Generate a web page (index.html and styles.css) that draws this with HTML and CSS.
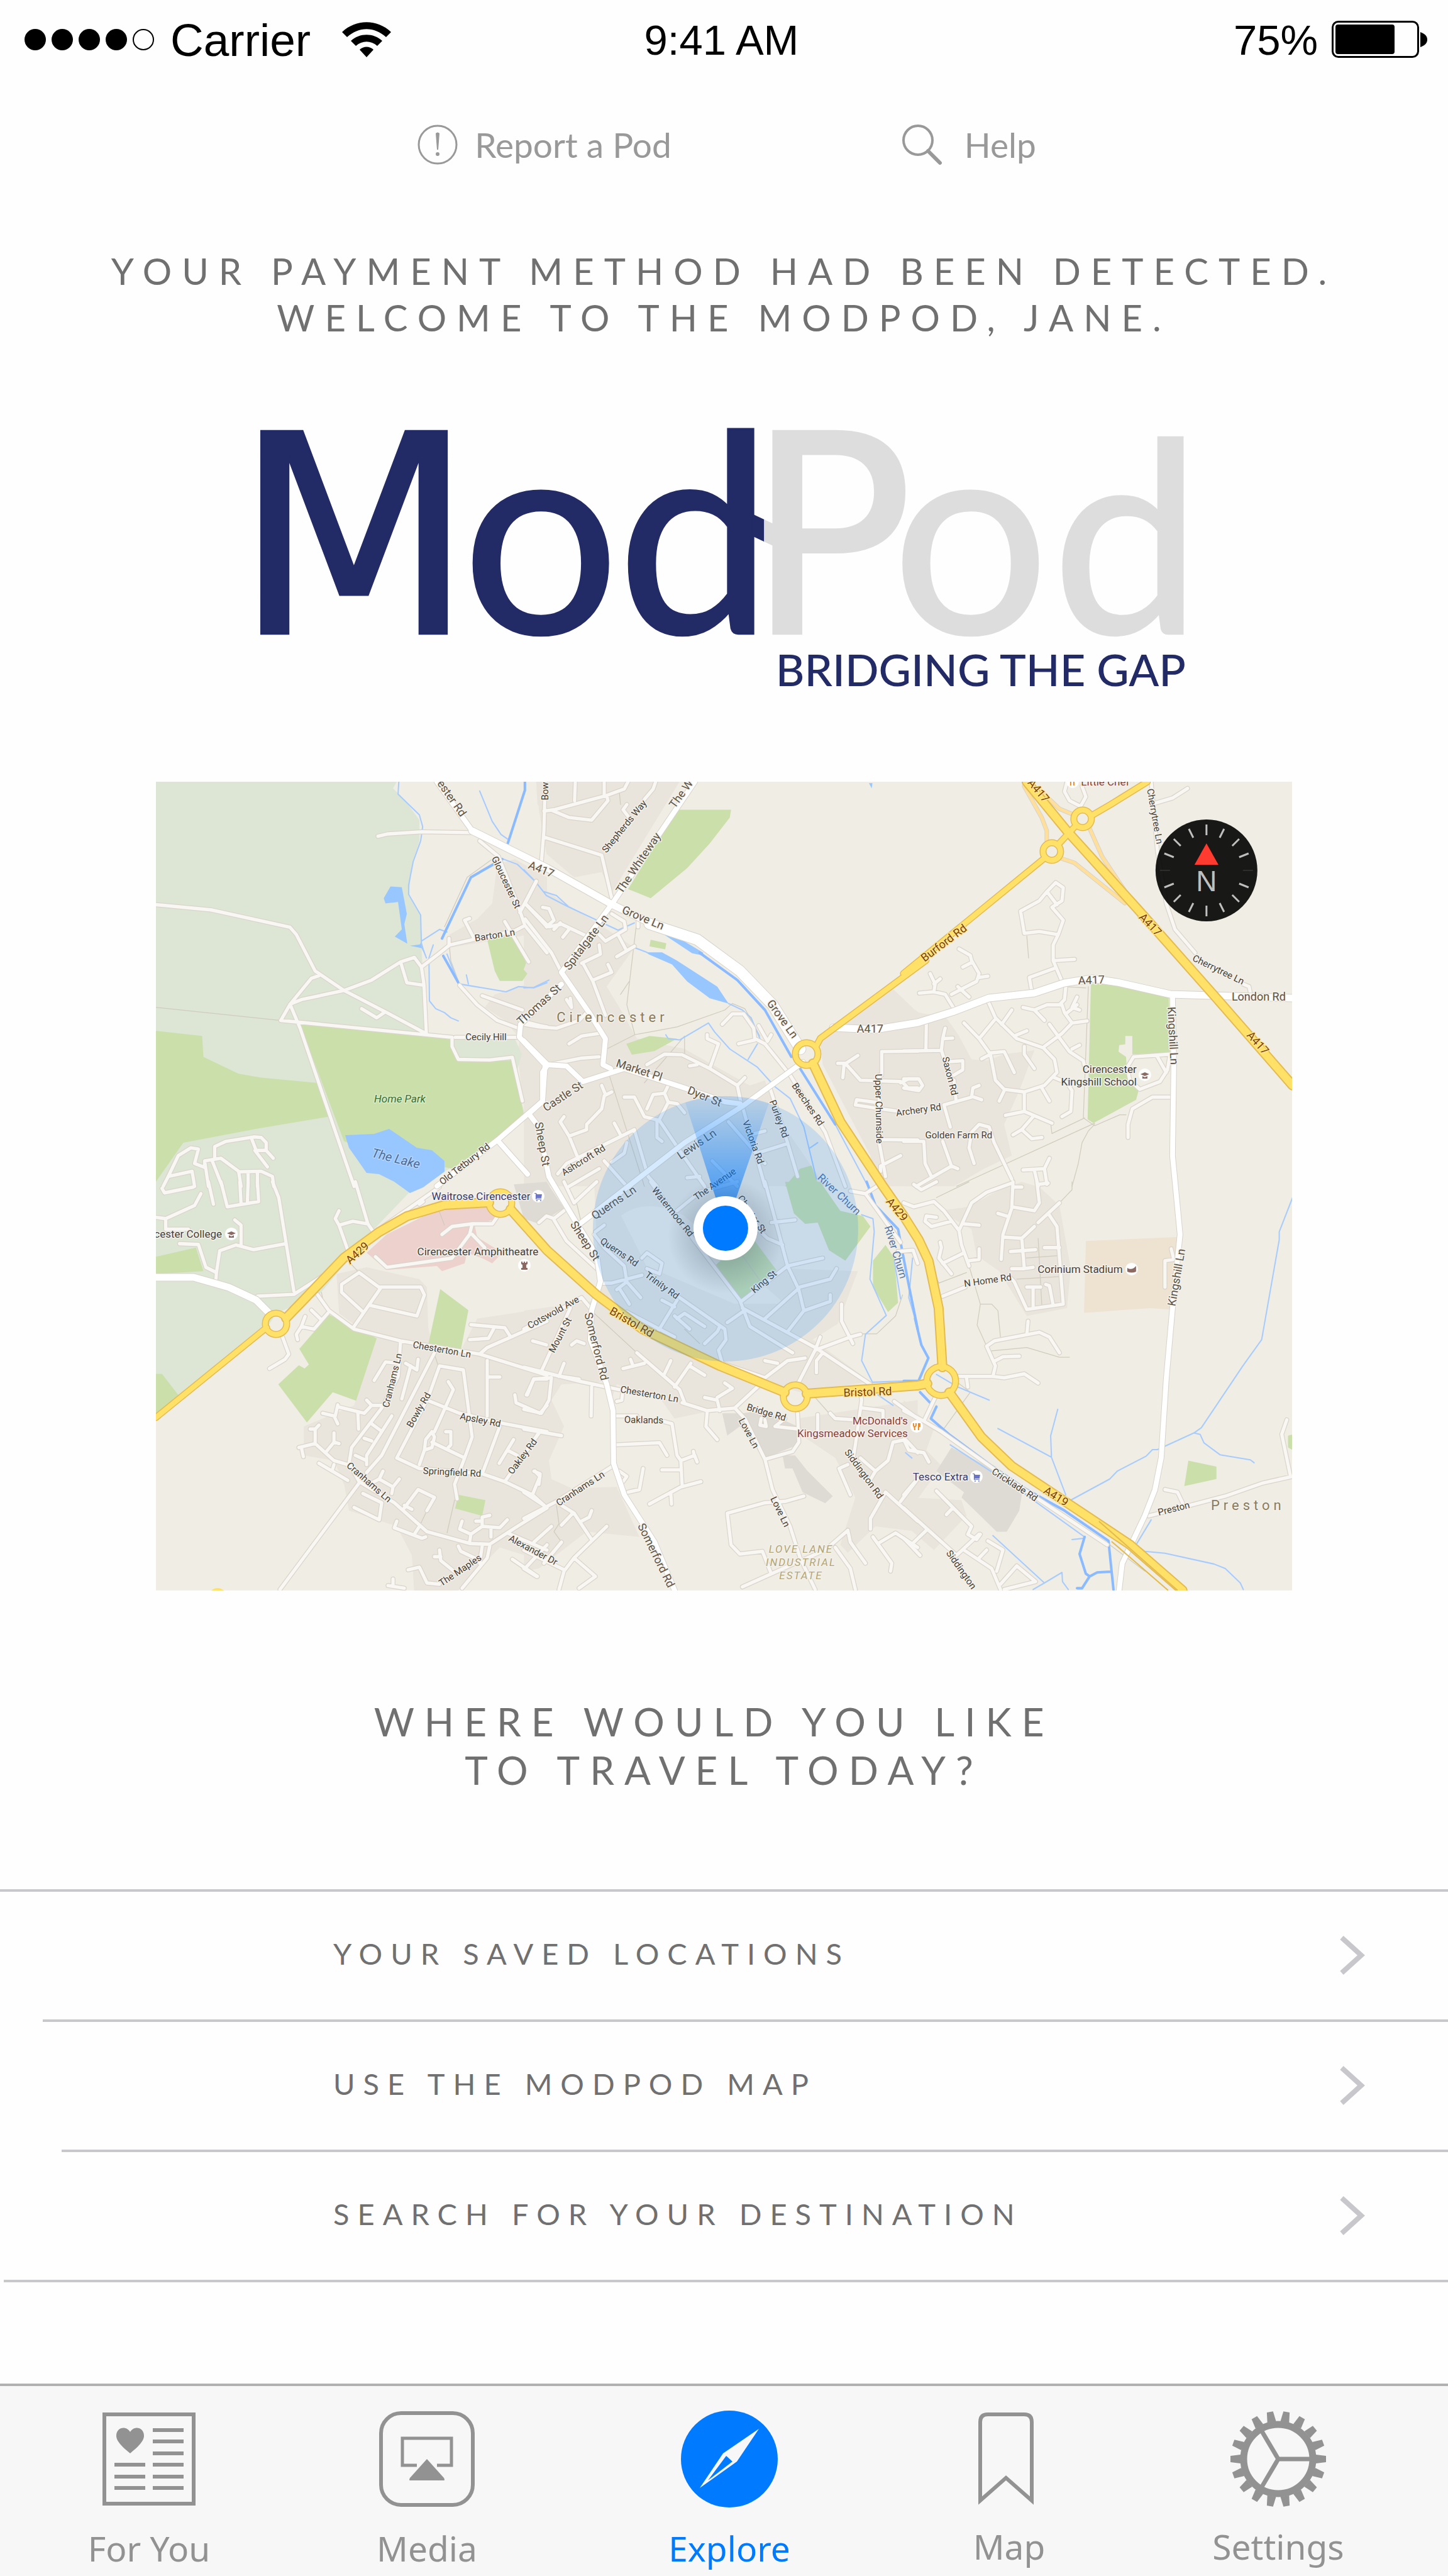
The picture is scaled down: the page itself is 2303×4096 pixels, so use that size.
FILE: index.html
```html
<!DOCTYPE html>
<html lang="en">
<head>
<meta charset="utf-8">
<meta name="viewport" content="width=device-width, initial-scale=1">
<title>ModPod</title>
<link rel="stylesheet" href="styles.css">
</head>
<body>
<div class="app">
  <header class="status">
    <div class="status-left">
      <span class="signal"><i></i><i></i><i></i><i></i><i class="off"></i></span>
      <span class="carrier">Carrier</span>
      <svg class="wifi" viewBox="0 0 78 56" aria-hidden="true">
        <path d="M0 16C22-5 56-5 78 16L70 24C51 7 27 7 8 24Z"/>
        <path d="M14 30C28 17 50 17 64 30L56 38C46 29 32 29 22 38Z"/>
        <path d="M28 44C34 38 44 38 50 44L39 56Z"/>
      </svg>
    </div>
    <time class="clock">9:41 AM</time>
    <div class="status-right">
      <span>75%</span>
      <svg class="battery" viewBox="0 0 152 60" aria-hidden="true">
        <rect x="1.500" y="1.500" width="136" height="56" rx="9" fill="none" stroke="#000" stroke-width="3"/>
        <rect x="6" y="6" width="94" height="47" rx="4"/>
        <path d="M141 18C149 21 152 25 152 30C152 35 149 39 141 42Z"/>
      </svg>
    </div>
  </header>

  <nav class="tools" aria-label="Support">
    <a href="#report">
      <svg viewBox="0 0 66 66" aria-hidden="true">
        <circle cx="33" cy="33" r="30" fill="none" stroke="#999" stroke-width="3"/>
        <path d="M30 15Q33 12 36 15L34 41H32Z" fill="#999"/><circle cx="33" cy="48" r="3" fill="#999"/>
      </svg>
      <span>Report a Pod</span>
    </a>
    <a href="#help">
      <svg viewBox="0 0 66 66" aria-hidden="true" fill="none" stroke="#999">
        <circle cx="26" cy="26" r="23" stroke-width="4"/>
        <path d="M42 43L61 62" stroke-width="6" stroke-linecap="round"/>
      </svg>
      <span>Help</span>
    </a>
  </nav>

  <main>
    <h1 class="welcome">YOUR PAYMENT METHOD HAD BEEN DETECTED.<br>WELCOME TO THE MODPOD, JANE.</h1>

    <svg class="logo" viewBox="0 0 1464 424" role="img" aria-label="ModPod, bridging the gap">
      <text class="mark" y="329"><tspan class="navy cap" x="-42">M</tspan><tspan class="navy" x="318">o</tspan><tspan class="navy" x="563">d</tspan><tspan class="pale cap" x="767">P</tspan><tspan class="pale" x="997">o</tspan><tspan class="pale low" x="1250">d</tspan></text>
      <path d="M776 140L795 149V184L776 175Z" fill="#222b66"/>
      <path d="M795 149L812 157V192L795 184Z" fill="#ddd"/>
      <text class="tagline" x="1461" y="412" text-anchor="end">BRIDGING THE GAP</text>
    </svg>

    <svg class="map" viewBox="0 0 1808 1286" role="img" aria-label="Map of Cirencester">
      <defs>
        <linearGradient id="beam" x1="0" y1="1" x2="0" y2="0">
          <stop offset="0" stop-color="#007aff" stop-opacity=".8"/><stop offset="1" stop-color="#007aff" stop-opacity=".04"/>
        </linearGradient>
        <radialGradient id="shade"><stop offset=".4" stop-color="#345" stop-opacity=".4"/><stop offset="1" stop-color="#345" stop-opacity="0"/></radialGradient>
        <g id="minor">
          <path transform="translate(-4.4 -5.1) scale(.3995 .4136)" d="M895 222L935 213L1070 205L1260 208M11 485L230 505L545 572L570 600L645 740L760 815L930 900L1085 980M660 758L630 768L545 868L508 930L1190 995L1190 1030L1215 1080L1340 1082L1430 1072L1470 1240M545 868L585 960L800 1568M545 868L590 850L760 815L870 775L985 705L1040 688L1068 725L1078 790L1088 985M985 705L1010 785L1078 795M1068 725L1135 675L1180 640L1280 618L1440 585L1480 565M830 885L890 920L920 900M1178 615V640M1275 610L1240 545L1260 538M1300 240L1375 300L1450 480L1480 565L1568 670M1525 395L1460 515M1480 480L1568 570M1400 550L1495 705M1220 795L1290 870L1370 930L1455 960M1310 835L1470 890M1460 930L1540 950L1568 955M1203 995H1458M40 1568L60 1530L100 1450L150 1420L180 1425L165 1480L205 1495L205 1470L270 1460L340 1510L350 1568M60 1530L155 1510L165 1568M245 1460V1415L290 1395L400 1378L430 1380L450 1400V1430L478 1460M390 1380L410 1430H450M405 1430L455 1493M205 1470L220 1568M235 1470L275 1568M340 1512L430 1510L475 1530L480 1568M378 1515V1568M415 1515V1568"/>
          <path transform="translate(-4.4 636.2) scale(.3995 .4183)" d="M35 25L45 42L160 20M11 135L50 140L165 90L190 45M50 140V180H140M105 235L180 238L210 325L252 345L265 262L330 240L400 258L530 235M325 145L350 165V240M252 345L250 370M475 0L500 60L560 415M415 435L560 428L680 355L870 200L1140 20M740 110L725 140L740 165L775 260M740 165L795 150L855 160L880 195M855 160L805 0M1060 85L1075 75M1150 200L1190 170L1270 160L1350 160L1372 130M1270 160L1260 200L1190 290L930 325L885 285M1270 200L1320 250M220 0L240 85M270 0L295 95L420 75L415 0M378 0L375 80M345 0L350 85M655 430L700 490L800 560L985 605L1300 655L1568 735M695 500L640 560L590 550L605 512M590 550L570 580L575 600M630 488L665 520M515 590L540 655L525 675L463 710M800 550L905 405L820 345L750 390V420L830 490M905 400H1065L1080 430L1050 510L865 470M985 605L975 740L910 860L790 1010L780 1070L820 1140L960 1220L1090 1330L1260 1375L1340 1378L1450 1310L1568 1240M1120 650L910 1040L850 1105M820 1145L505 1550M880 755L925 685L980 690M1005 690L1050 715L1055 675M1025 700L990 825M1095 820L1140 700L1235 715L1270 970L1240 1050L1200 1150L1210 1205M1095 820L970 1050L1060 1090L1310 1110L1400 1140L1510 1190L1568 1240M1090 830L1220 880L1400 920L1568 950M1175 760L1195 790L1120 950M1110 990L1240 1050M1060 1075L1080 1020L1085 980L1110 950L1120 970L1110 1010L1080 1020M1165 950H1185V1000L1175 1010M1330 680V890M1330 742H1380M1265 543L1400 555L1420 585M1260 600L1335 595L1355 560M1300 655L1330 630L1568 530M1440 810L1445 840L1540 880L1568 850M1490 810L1515 750H1568M1380 930L1310 1110M1400 1140L1540 950M1435 980L1378 1070M1410 1020L1450 1040M1520 1100L1540 1120L1510 1190M850 830L870 850H910M675 880L720 890L735 920M735 848L725 890M735 855L840 880L870 850M815 880L818 940M870 920L905 945M950 890L850 1040L850 1075M850 1060L805 1040M840 975L870 985M580 1010L645 995L720 1060L775 1075M645 995V940H625M645 940L660 925M598 1045L590 1010M690 1025L720 990V955M720 990L740 995M660 1070L775 1135M720 1075L712 1100M915 1100L900 1130L955 1160L980 1130M955 1160L950 1185M900 1130L860 1150M835 1185L910 1220L900 1285L800 1238M1000 1240L1055 1170L1120 1200L1090 1250M1030 1245L1000 1230M970 1290L960 1315L1070 1355L1085 1350M1040 1340L1060 1310M1230 1290L1220 1320L1265 1340L1310 1310L1380 1315L1410 1285M1340 1268L1310 1275V1310M1345 1315V1350M1265 1340L1260 1370M1285 1290H1310M1310 1385L1300 1450M1340 1385L1330 1430L1230 1545M1215 1385L1225 1405L1280 1430M1140 1400L1145 1440L1210 1490M1120 1425H1145M1015 1475L1060 1465L1090 1525L1140 1530M935 1535L1000 1545M955 1510V1535M1430 1435L1530 1500M1480 1470L1568 1380M1410 1335L1568 1400"/>
          <path transform="translate(585.2 -5.1) scale(.3995 .4136)" d="M85 12L80 200L70 320M80 125L120 120L330 65L400 40L415 12M205 12L202 85M320 12V60M110 122L180 150L270 160L335 85L330 65M525 12L515 40L480 80M80 225L310 295L350 460M410 100L395 120L415 145M50 395L5 480L100 570L150 560L270 615M5 540L110 670L150 745M75 495L100 500L120 545L90 570M180 580L155 610M145 555L120 580M350 520L400 550L405 580L325 625L300 600M375 600L405 655M370 685L440 645M455 540V570M300 640L305 675L230 710M235 710L275 780L325 910M275 775L350 745L335 715M170 850L190 880L185 845M0 945L60 955L130 960L220 930L250 900M180 1020L230 990L300 980M110 1098L230 1075L300 1070M490 1100L560 1060L630 1062L740 1115L850 1180L865 1250M740 1115L775 1020L730 1000V985M690 1100L660 1105M850 1180L880 1150M790 945L830 905H875L915 960L920 1005L855 1020M920 1000L960 1020L1060 1140L1200 1360L1280 1568M935 950L970 1010L985 985M980 1190L1050 1400L1090 1530M870 1260L960 1568M815 1320L960 1480M930 1440L1045 1405M900 1370L960 1355M400 1225H440L480 1300L540 1315L620 1430L720 1568M575 1180L560 1210L515 1215L490 1270M560 1210L575 1245L610 1250L640 1285M575 1245L540 1310M530 1320V1380L550 1395M440 1350L170 1480L135 1520M440 1350L495 1530L530 1568M160 1300L145 1320L180 1375L250 1350V1330L310 1270L320 1220L350 1205M180 1375L220 1470M310 1180L325 1215M360 1325L385 1370M320 1470L410 1568M300 1500L180 1568M410 1400L400 1440L350 1475M750 1470L850 1568M650 1535L700 1530M1270 1150L1275 1100L1330 1065M1250 1095H1280L1340 1160L1500 1165M1425 1140V1050L1568 1048M1500 1170L1530 1155H1568M1510 1170L1530 1190H1568M1415 1140V1400L1440 1530M1420 1388L1568 1390M1420 1270L1320 1255L1325 1235L1400 1245M1420 1270L1480 1278M1500 1450L1420 1490V1510"/>
          <path transform="translate(585.2 636.2) scale(.3995 .4183)" d="M0 705L230 760L380 790M630 840L730 870L840 860L930 780M450 650L620 790L640 840M395 710L480 690M425 675L435 700M585 680L560 730M665 690L600 780M660 700L720 735M720 820L770 830L780 870M770 820L830 785L800 765M730 875L725 930L770 980M360 890H450M560 912L590 920L610 1040L625 1060L630 1150M365 1000L540 992L570 1040M625 1060L680 1040L690 1065M675 1025L680 1045M550 1095H625M500 1225L625 1160L705 1140M585 1180L588 1225M415 1180L460 1170L475 1090M380 1100L410 1120L395 1140M355 1080L130 1215L0 1280M840 860L880 900L960 1055L990 1170L1060 1310L1100 1430L1160 1550M960 1055L1070 1025L1095 990L1090 880M1090 770L1160 640L1180 590M1120 670L1050 680L960 745L790 690M960 680L1010 690M1040 900L1000 930L1095 940M945 900L940 925L965 930L960 905M1160 640L1300 590L1340 580M1265 465V530L1310 615M1190 650L1165 680V725M680 225L860 450L900 550L1070 650M870 480L1160 630L1380 770M865 455L1050 320L1190 290M960 0L1050 320L1095 410L1115 490L1050 570M960 520L1100 400L1220 370L1245 330M1115 490L1220 455V430M985 155L1080 145M920 170L970 215L1030 240M505 0L520 20L680 225M610 110L700 40L850 0M810 535L870 495M620 440L800 560L805 600L775 640L790 690M610 450L530 575M550 450L600 475M600 510L660 560M610 520L640 500L720 550M780 550L770 570L720 615M310 385H350L470 355M280 200L320 250L400 320L410 380L370 410M320 165L285 190M410 380L465 440M380 405L420 465M470 290L490 270L550 310L540 350L490 330M410 495L600 590M60 155L90 130L120 140L160 110M120 145L170 225L290 330M160 0L200 80L290 0M35 605L90 620M70 720L185 480M150 740L220 750M160 690L140 740M265 480L230 440L0 560M190 620L210 605L240 615M10 810L40 750L110 745L100 830L70 880L0 865M270 780L268 890M395 790L390 830L370 835M0 940L150 965M55 960L0 1040M40 1100L65 1110L60 1150M0 1180L80 1230M150 1230L200 1260L270 1360M195 1260L150 1305M230 1290L260 1275L270 1250M330 1310L200 1430L160 1480L140 1550M160 1475L0 1400M200 1430L285 1500L220 1545M110 1310L40 1370M150 1370L80 1450M0 1470L50 1500M1340 800L1345 830L1320 1000L1310 1060M1350 860L1430 870V900M1220 880L1240 900L1320 905M1170 885V960M1340 1050L1400 1100L1450 1060L1470 990L1520 980L1568 1030M1300 1190L1255 1090L1290 1075M1400 1100L1375 1140M1440 1180L1568 1290M1440 1180L1380 1280V1320M1500 1215L1568 1130M1475 835L1568 900M1115 1195L1040 1215L960 1220L810 1260L825 1380L860 1415L950 1405L985 1490M870 1540L1080 1450L1200 1400L1290 1325M1290 1325L1300 1370L1360 1450M1240 1390L1300 1470L1320 1550M1390 1350L1465 1450L1460 1480M1410 1375L1480 1335L1568 1390M1300 35L1360 45L1410 15M1360 45L1500 230M1490 265L1550 260L1568 310"/>
          <path transform="translate(1189.5 -5.1) scale(.3995 .4136)" d="M700 105L660 85L640 50L650 12M705 105L725 70L710 30M1000 95L1070 75L1130 38M985 12L1010 280L1045 480L1080 580L1160 670M1350 790L1375 800L1380 825M480 595L465 510L540 470L570 435L605 400L635 420L630 470L590 495L635 545L615 600L540 588ZM570 435L610 485M615 600L595 640V700L630 780M600 700L680 695M600 730L500 765L510 820M220 655L265 680L270 700L300 750L290 780L190 830M235 725L265 710M300 765L335 760M215 800L260 840M105 750L125 790L120 820L62 825M120 790L145 770M120 820L165 830L200 885M335 855L365 920L450 1000L555 1035L600 1080L610 1130L560 1180L480 1205L400 1195L365 1160L345 1060L300 1000L240 940M300 1000L360 930M345 1055L400 1050L440 1130M310 1078L345 1060M480 1030V1060L520 1115M440 990L490 970M390 945L430 890M400 1200L380 1240M480 1205V1280L590 1325M480 1280L405 1295M515 1300L470 1350L435 1370M470 1350L510 1385L550 1380M550 1190L580 1240M600 1150L650 1170L670 1200L665 1280L630 1300M560 1030L630 980L670 940L730 932M580 945L660 1050L715 1085L720 1110M670 1040L700 1025M640 900L670 940M475 880L520 890L560 930M520 890L570 870H630L640 900M645 800L640 850L620 870M690 840L670 880L700 890M645 905L690 870M90 940L88 1045M0 1048L150 1045L155 1000L165 960M155 1000L195 998M150 1045L165 1090L235 1085V1120L200 1140M200 1160L208 1235M160 1255L270 1225L275 1190L300 1180M280 1225L310 1235M160 1255L185 1340M0 1155H60L75 1180L60 1200L0 1190M0 1395H80L85 1480L110 1530M155 1395L190 1490L50 1568M190 1490L215 1500M280 1480L260 1420L270 1360L300 1330L340 1340L360 1400L430 1540M475 1505L560 1500L580 1460M520 1505L535 1568M560 1500L570 1560M890 1110L915 1070L1060 1060L1050 1120L1020 1165L940 1195L900 1160ZM1010 1070L1045 1130M1070 1225H990L910 1270L893 1330V1380"/>
          <path transform="translate(1189.5 636.2) scale(.3995 .4183)" d="M0 80L40 95L120 75L160 110L220 185L270 80L330 40L430 5M40 10L70 30L130 0M110 170L190 150M110 170L85 150L90 130L130 135M240 160L300 165M220 185L230 240L260 320M145 230L150 250L140 290L190 350M155 310L240 270M260 300L300 295V255M435 0L430 100L395 200L388 295M430 95L520 110L540 80L530 0M375 120L410 130M435 20H470M535 10L575 5M395 210L470 215L520 170M535 155L620 80M575 120L610 170L635 465L490 485L440 380L420 360M470 215L480 330H430M425 265L525 258M480 330L515 325M560 250H620M515 480V400M490 400H545M595 470L580 395L565 390M155 435L245 400M495 530L490 580M620 650L580 590L540 572L360 605L330 625L365 700L355 740H215M365 680L395 665L460 663M355 740L400 745L480 730L535 765M250 745L255 780M125 820L80 910L0 870M80 910L150 950L400 1120L810 1380M0 980L20 1020L80 1030L100 1065M0 1190L45 1140M0 1240L210 1420L300 1340M90 1325L30 1380M0 1355L65 1420M130 1175L270 1310M170 1265L195 1240M270 1310L255 1340L290 1360L305 1340M240 1400L350 1470L385 1550M335 1365L395 1400L370 1480M300 1430L330 1400M385 1530L450 1460L525 1520L400 1550M1040 400V300L1075 295L1065 255M975 1270L1080 1245L1280 1195L1430 1145L1548 1120M1040 1170L1090 1180L1110 1220M1525 905L1505 960L1540 1120"/>
        </g>
        <g id="major">
          <path d="M447 0L503 78L622 137L725 195L785 224"/>
          <path d="M857 0L725 195L645 303L689 367L715 409L711 450L723 456"/>
          <path d="M645 322L580 386L578 406L619 450L615 508L543 570L591 624"/>
          <path d="M543 570L447 643M585 412L623 450L653 452L679 477L745 456L841 487L905 509L929 512"/>
          <path d="M623 450L615 462V508L593 528L609 549L625 628L665 695L701 753L707 795L693 841L691 887L717 958L727 1000L728 1084L745 1134L793 1209L825 1286"/>
          <path d="M1029 446L933 516L841 574L677 701"/>
          <path d="M1617 342L1619 450L1617 595L1621 636L1629 720L1617 837L1607 950L1599 1075L1589 1126L1573 1167L1537 1243L1532 1286"/>
        </g>
        <g id="broad">
          <path d="M1077 391L1144 394L1212 383L1270 365L1325 344L1397 336L1445 320L1489 313L1529 319L1613 338L1808 344"/>
          <path d="M0 788H60L116 804L159 824L180 845M503 78L622 137L725 195L785 224"/>
          <path class="wide" d="M785 226L861 251L929 301L981 355L1025 425"/>
        </g>
        <g id="yellow">
          <path d="M0 1011L176 868M1225 284L1057 408L1050 421M1189 305L1414 121M1435 100L1463 70M1488 54L1519 36L1577 0"/>
          <path class="wide" d="M207 853L235 824L299 757L355 716L399 691L459 673L530 669M564 680L622 745L701 816L773 870L897 929L1000 971M1035 973L1212 960L1227 957M1045 448L1089 541L1157 644L1189 690L1213 728L1229 762L1245 837L1251 931M1262 971L1313 1042L1361 1088L1549 1213L1633 1286M1385 0L1449 78L1505 140L1561 202L1685 342L1808 483"/>
          <circle cx="191" cy="862" r="17"/><circle cx="548" cy="670" r="18"/><circle cx="1017" cy="978" r="19"/><circle cx="1249" cy="953" r="23"/><circle cx="1035" cy="433" r="18"/><circle cx="1425" cy="111" r="14"/><circle cx="1474" cy="59" r="14"/>
        </g>
      </defs>

      <rect width="1808" height="1286" fill="#f0ede5"/>
      <g fill="#e9e5dd">
        <path transform="translate(-4.4 -5.1) scale(.3995 .4136)" d="M1568 380L1440 310L1370 330L1350 480L1290 540L1180 600V650L1500 600L1525 780L1360 830L1320 880L1400 930L1460 1000L1450 1060L1480 1290L1568 1250ZM1525 12H1568V130L1530 100Z"/>
        <path transform="translate(-4.4 636.2) scale(.3995 .4183)" d="M730 350L850 325L1060 370L1090 400L1095 550L1110 620L1225 640L1290 520L1568 480V1450L1480 1420L1380 1390L1200 1568H1040L1030 1420L970 1310L780 1250L760 1150L720 1060L600 1040V930L800 850L880 600L740 500Z"/>
        <path transform="translate(585.2 -5.1) scale(.3995 .4136)" d="M55 12H620L350 440L310 360L200 380L90 290L60 120ZM0 380L300 560L440 650L330 800L380 880L450 1000L640 1040L900 1180L960 1160L1010 1300L1200 1568H0ZM1180 1010L1460 800L1568 900V1568H1400L1380 1450L1190 1100Z"/>
        <path transform="translate(585.2 636.2) scale(.3995 .4183)" d="M0 490L300 450L980 760L850 850L600 900L540 820L370 770L340 850L330 760L150 770L110 830L160 930L100 1060L110 1130L190 1165L370 1160L460 1350L250 1330L60 1470L0 1480ZM280 0H950L1060 330L1330 340L1250 540L1150 600L1380 760L1100 800L880 740L300 450ZM1090 900L1568 830V1330L1400 1310L1290 1410L1260 1380L1320 1200L1240 1050L1100 960Z"/>
        <path transform="translate(1189.5 -5.1) scale(.3995 .4136)" d="M0 860L60 900L170 920L220 990L270 1080L330 1085L400 1060L520 1045L480 1150L460 1200L400 1330L430 1450L320 1500L200 1568H0Z"/>
        <path transform="translate(1189.5 636.2) scale(.3995 .4183)" d="M140 110L260 95L380 30L470 0L540 20L620 90L665 330L650 480L490 510L380 340L290 280L270 180ZM0 830L120 940L90 1020L150 1080L60 1200L0 1220ZM20 1200L230 1210L250 1270L120 1400L0 1300Z"/>
      </g>
      <path fill="#f0ede5" d="M740 690Q780 660 840 690L1000 830L920 830L780 770Z"/>
      <g fill="#dedad4">
        <path transform="translate(585.2 636.2) scale(.3995 .4183)" d="M790 880L870 880L950 870L1090 930V1000L960 1050L860 930L810 965ZM1030 1040H1080L1130 1100L1230 1195L1200 1222L1110 1180L1070 1090H1040ZM-40 10L90 0L160 100L60 160L0 140Z"/>
        <path transform="translate(1189.5 636.2) scale(.3995 .4183)" d="M190 1010L350 1090L470 1190L460 1250L410 1330H370L230 1200L240 1180L130 1100Z"/>
      </g>
      <g fill="#dde6d5">
        <path transform="translate(-4.4 -5.1) scale(.3995 .4136)" d="M11 12H970L955 38L1000 80L1060 160V240L1030 330L1018 450L1065 530L1068 640L1085 985L1190 995L1440 1000L1468 1060L1440 1150L1480 1290L1360 1380L1180 1500L1060 1568H11Z"/>
        <path transform="translate(-4.4 636.2) scale(.3995 .4183)" d="M11 0H1060L870 190L660 430L490 500L450 560L11 880Z"/>
      </g>
      <g fill="#cbdfab">
        <path transform="translate(-4.4 -5.1) scale(.3995 .4136)" d="M11 970L195 990L200 1070L340 1135L430 1150L650 1170L700 1300L420 1345L120 1400L11 1550ZM585 945L1090 990L1185 1000L1215 1085H1430L1480 1310L1190 1500L940 1450L760 1395ZM1330 620L1435 600L1485 710L1475 735L1490 750L1470 778H1380L1360 740Z"/>
        <path transform="translate(-4.4 636.2) scale(.3995 .4183)" d="M11 285L170 250L200 340L11 350ZM11 730H35L100 810L11 885ZM700 505L890 595L808 832L715 800L612 915L498 770L580 697L603 710L620 695L582 635ZM1143 408L1255 488L1225 640L1095 620ZM1215 1190L1323 1210L1310 1270L1202 1242Z"/>
        <path transform="translate(585.2 -5.1) scale(.3995 .4136)" d="M610 120H825L820 150L740 250L650 345L505 460L415 425ZM505 620L567 633L563 657L500 645ZM408 1020L500 990L610 1000L520 1048L430 1062ZM1040 1568L1100 1500L1145 1488L1175 1568Z"/>
        <path transform="translate(585.2 636.2) scale(.3995 .4183)" d="M900 200L1005 335L865 450L765 315ZM1040 0H1180L1260 110L1350 130L1380 170L1280 300L1215 260L1170 155L1120 160L1075 120ZM1440 240L1475 290L1490 460L1450 495L1390 400V300Z"/>
        <path transform="translate(1189.5 -5.1) scale(.3995 .4136)" d="M745 790H820L1055 840L1060 1055L910 1060V990H882V1022L858 1025L855 1050L885 1070L890 1150L935 1200L925 1235L755 1325L732 1310Z"/>
        <path transform="translate(1189.5 636.2) scale(.3995 .4183)" d="M1133 1060L1245 1083V1130L1117 1157ZM1530 965L1548 960V1020L1530 1010Z"/>
      </g>
      <path fill="#ecd1cd" transform="translate(-4.400 636.2) scale(.3995 .4183)" d="M850 270L930 200L1100 120L1200 100L1330 95L1370 140L1280 165L1290 210L1390 270L1350 310L1310 290L1250 270L1240 310L1150 340L1130 320L930 335Z"/>
      <path fill="#eee2d1" transform="translate(1189.5 636.2) scale(.3995 .4183)" d="M725 225L1088 210V300L1060 485L980 480L718 498Z"/>
      <g fill="#98c7ff">
        <path d="M301 562L347 560L371 552L415 582L439 586L459 603V620L425 645L404 654L379 636L355 624L335 622L319 599L307 582Z"/>
        <path transform="translate(-4.4 -5.1) scale(.3995 .4136)" d="M918 460L945 415L990 418L1010 520L1000 560L1012 635L962 608L990 580L975 475L925 480ZM1022 643L1062 638L1068 625L1088 690L1068 652Z"/>
        <path transform="translate(585.2 -5.1) scale(.3995 .4136)" d="M485 668H550L610 700L770 800L815 865L740 845L650 780L590 715L500 677ZM515 572L620 615L715 670L710 680L670 672ZM1374 18H1388L1385 38Z"/>
      </g>
      <g class="path">
        <path transform="translate(-4.4 -5.1) scale(.3995 .4136)" d="M11 880L508 930M1160 570L1250 380L1350 310M1180 650L1185 700L1220 790"/>
        <path transform="translate(585.2 -5.1) scale(.3995 .4136)" d="M447 570L410 870L442 985L330 1040M442 985L610 955L800 890L830 865L880 885L940 990M340 1140L480 1568M480 1170L640 990V1060M385 830L420 780M380 50L385 100"/>
        <path transform="translate(585.2 636.2) scale(.3995 .4183)" d="M280 500L450 650M1345 578H1405L1480 510L1508 430M870 280L940 375M1160 820L1220 885M130 1230L140 1300L120 1330L150 1370M230 160L210 80M640 560L700 615"/>
        <path transform="translate(1189.5 -5.1) scale(.3995 .4136)" d="M490 605L497 690M735 800L715 1305L760 1335L860 1293H885M210 1568L760 1325M640 800L725 805M590 1365L720 1305M590 1365L585 1325M760 1330L735 1355L710 1400L695 1480L670 1568"/>
        <path transform="translate(1189.5 636.2) scale(.3995 .4183)" d="M130 60L260 0M670 0V30L620 80M260 320L305 465L292 545L330 625M305 465H350L375 490L385 590M345 643L490 630L620 667H660M535 215L550 475M485 290L620 280M450 370L630 360M120 350L140 385L250 345M210 760L265 800L155 945M820 1380L960 1480"/>
        <path transform="translate(-4.4 636.2) scale(.3995 .4183)" d="M785 310L820 345M1140 115L1160 165M1120 655L1135 700M1200 1210L1170 1335M1095 1240L1060 1310M670 420L680 470"/>
      </g>
      <g class="stream">
        <path transform="translate(-4.4 -5.1) scale(.3995 .4136)" d="M978 12L975 60L1060 140L1073 185L1065 240L1035 320L1017 410V445L1065 525L1068 640L1088 690M1115 640L1098 690L1100 855L1125 885L1160 900L1185 920L1215 932M1068 625L1140 580L1170 590M1300 48L1350 165L1385 215L1410 232M1220 790L1405 820L1455 800L1515 805L1568 785M1395 310L1450 330L1515 390M1170 675L1215 785M1247 755L1255 790"/>
        <path transform="translate(585.2 -5.1) scale(.3995 .4136)" d="M0 350L45 395L90 450L170 490L375 583L440 555M80 435L130 450L175 490M445 652L490 668M565 985L575 1000L620 1005L735 940L760 975L820 1040L930 1110L1000 1185L1060 1230L1115 1340L1140 1440L1165 1540M815 865L870 890L905 920L940 1000M930 1020L893 1080M1240 1330L1370 1568M1140 1420L1170 1400M0 805L40 803L100 775"/>
        <path transform="translate(585.2 636.2) scale(.3995 .4183)" d="M1345 125L1390 140L1395 190L1378 370L1443 508L1360 580L1345 680L1388 762L1568 755M1410 810L1470 850M1475 300L1500 445M1520 1030L1545 1050"/>
        <path transform="translate(1189.5 636.2) scale(.3995 .4183)" d="M35 290L20 440L45 520M185 1000L450 1165L720 1350M670 1360L720 1355M355 1345L560 1525L630 1485L632 1520L655 1550M560 1525L515 1550M130 732L215 780L340 830M375 938L588 1047L585 965L613 865M588 1047L645 1190M1548 60L1495 190V220L1425 600L1350 700L1185 935L1155 955L1010 1018H990L965 1043L850 1100L820 1130L665 1210M1155 955L1180 960L1195 992L1260 1038L1380 1057L1395 1068M985 1285L925 1380L960 1405L1040 1412L1235 1453L1280 1470L1340 1525L1352 1550"/>
      </g>
      <g class="river">
        <path transform="translate(-4.4 -5.1) scale(.3995 .4136)" d="M1480 12V45L1410 255M1390 310L1265 380L1150 615M1155 682L1215 785"/>
        <path transform="translate(585.2 -5.1) scale(.3995 .4136)" d="M700 670L850 775L960 890L1065 1070M1100 1115L1240 1330"/>
        <path transform="translate(585.2 636.2) scale(.3995 .4183)" d="M1365 0L1400 90L1490 180L1530 380L1568 560"/>
        <path transform="translate(1189.5 636.2) scale(.3995 .4183)" d="M45 520L70 620L98 670L60 755M0 757H60M65 800L110 845M130 855L108 900L180 960L350 1080L480 1165L640 1250L815 1365L835 1550M720 1350L700 1415L725 1490L740 1500L710 1545H690M740 1500L770 1485L825 1482"/>
      </g>
      <use href="#minor" class="minor-edge"/>
      <use href="#minor" class="minor-fill"/>
      <use href="#major" class="major-edge"/>
      <use href="#broad" class="broad-edge"/>
      <use href="#major" class="major-fill"/>
      <use href="#broad" class="broad-fill"/>
      <g class="ramp-edge"><path id="ramps" d="M1381 7L1409 57L1417 78V98M1413 20L1437 43L1461 53M1485 74L1505 119L1549 185M1437 121L1461 129L1541 193"/></g>
      <use href="#ramps" class="ramp-fill"/>
      <use href="#yellow" class="yellow-edge"/>
      <use href="#yellow" class="yellow-fill"/>
      <path d="M1500 1176L1625 1286M1520 1208L1610 1286" fill="none" stroke="#e3bb50" stroke-width="2"/>
      <path d="M88 1286Q98 1278 108 1286Z" fill="#ffe168"/>

      <g class="label">
        <g class="m">
          <text transform="translate(471 26) rotate(55)">ester Rd</text>
          <text transform="translate(609 354) rotate(-42)">Thomas St</text>
          <text transform="translate(615 576) rotate(80)">Sheep St</text>
          <text transform="translate(647 500) rotate(-33)">Castle St</text>
          <text transform="translate(767 129) rotate(-56)">The Whiteway</text>
          <text transform="translate(835 19) rotate(-54)">The W</text>
          <text transform="translate(613 139) rotate(22)">A417</text>
          <text transform="translate(775 216) rotate(23)">Grove Ln</text>
          <text transform="translate(997 377) rotate(54)">Grove Ln</text>
          <text transform="translate(684 255) rotate(-53)">Spitalgate Ln</text>
          <text transform="translate(769 458) rotate(18)">Market Pl</text>
          <text transform="translate(873 500) rotate(22)">Dyer St</text>
          <text transform="translate(860 576) rotate(-34)">Lewis Ln</text>
          <text transform="translate(728 669) rotate(-34)">Querns Ln</text>
          <text transform="translate(1136 393)">A417</text>
          <text transform="translate(683 730) rotate(57)">Sheep St</text>
          <text transform="translate(701 898) rotate(76)">Somerford Rd</text>
          <text transform="translate(796 1230) rotate(64)">Somerford Rd</text>
          <text transform="translate(1623 788) rotate(-80)">Kingshill Ln</text>
          <text transform="translate(1618 404) rotate(87)">Kingshill Ln</text>
          <text transform="translate(1754 342)">London Rd</text>
          <text transform="translate(1488 315) rotate(-2)">A417</text>
        </g>
        <g class="s">
          <text transform="translate(557 160) rotate(65)">Gloucester St</text>
          <text transform="translate(539 244) rotate(-9)">Barton Ln</text>
          <text transform="translate(525 406)">Cecily Hill</text>
          <text transform="translate(491 608) rotate(-38)">Old Tetbury Rd</text>
          <text transform="translate(619 15) rotate(-90)">Bow</text>
          <text transform="translate(745 71) rotate(-51)">Shepherds Way</text>
          <text transform="translate(950 573) rotate(70)">Victoria Rd</text>
          <text transform="translate(991 536) rotate(70)">Purley Rd</text>
          <text transform="translate(1037 513) rotate(56)">Beeches Rd</text>
          <text transform="translate(680 602) rotate(-32)">Ashcroft Rd</text>
          <text transform="translate(1150 520) rotate(89)">Upper Churnside</text>
          <text transform="translate(1213 522) rotate(-8)">Archery Rd</text>
          <text transform="translate(889 640) rotate(-35)">The Avenue</text>
          <text transform="translate(822 684) rotate(51)">Watermoor Rd</text>
          <text transform="translate(948 688) rotate(56)">Chester St</text>
          <text transform="translate(737 748) rotate(34)">Querns Rd</text>
          <text transform="translate(805 801) rotate(36)">Trinity Rd</text>
          <text transform="translate(967 795) rotate(-40)">King St</text>
          <text transform="translate(632 844) rotate(-29)">Cotswold Ave</text>
          <text transform="translate(643 880) rotate(-62)">Mount St</text>
          <text transform="translate(785 974) rotate(10)">Chesterton Ln</text>
          <text transform="translate(776 1015) rotate(1)">Oaklands</text>
          <text transform="translate(971 1003) rotate(16)">Bridge Rd</text>
          <text transform="translate(943 1036) rotate(62)">Love Ln</text>
          <text transform="translate(993 1161) rotate(64)">Love Ln</text>
          <text transform="translate(1126 1101) rotate(54)">Siddington Rd</text>
          <text transform="translate(675 1124) rotate(-33)">Cranhams Ln</text>
          <text transform="translate(600 1222) rotate(28)">Alexander Dr</text>
          <text transform="translate(1281 1253) rotate(55)">Siddington</text>
          <text transform="translate(1323 793) rotate(-8)">N Home Rd</text>
          <text transform="translate(1366 1118) rotate(33)">Cricklade Rd</text>
          <text transform="translate(1619 1156) rotate(-14)">Preston</text>
          <text transform="translate(1277 562)">Golden Farm Rd</text>
          <text transform="translate(1263 468) rotate(76)">Saxon Rd</text>
          <text transform="translate(1589 55) rotate(80)">Cherrytree Ln</text>
          <text transform="translate(1690 299) rotate(26)">Cherrytree Ln</text>
          <text transform="translate(455 903) rotate(10)">Chesterton Ln</text>
          <text transform="translate(376 952) rotate(-76)">Cranhams Ln</text>
          <text transform="translate(418 999) rotate(-60)">Bowly Rd</text>
          <text transform="translate(516 1015) rotate(11)">Apsley Rd</text>
          <text transform="translate(583 1073) rotate(-53)">Oakley Rd</text>
          <text transform="translate(471 1098) rotate(3)">Springfield Rd</text>
          <text transform="translate(339 1114) rotate(41)">Cranhams Ln</text>
          <text transform="translate(484 1254) rotate(-34)">The Maples</text>
        </g>
        <g class="m brown">
          <text transform="translate(1179 680) rotate(50)">A429</text>
          <text transform="translate(757 859) rotate(30)">Bristol Rd</text>
          <text transform="translate(1132 970) rotate(-2)">Bristol Rd</text>
          <text transform="translate(1432 1136) rotate(32)">A419</text>
          <text transform="translate(1404 14) rotate(50)">A417</text>
          <text transform="translate(1582 227) rotate(46)">A417</text>
          <text transform="translate(1753 415) rotate(48)">A417</text>
          <text transform="translate(1253 256) rotate(-37)">Burford Rd</text>
          <text transform="translate(320 749) rotate(-42)">A429</text>
        </g>
        <g class="p">
          <text x="1470" y="775">Corinium Stadium</text>
          <text x="512" y="747">Cirencester Amphitheatre</text>
          <text class="navy-text" x="517" y="659">Waitrose Cirencester</text>
          <text class="navy-text" x="1248" y="1105">Tesco Extra</text>
          <text class="end" x="1560" y="457">Cirencester</text>
          <text class="end" x="1560" y="477">Kingshill School</text>
          <text class="end" x="105" y="719">cester College</text>
          <text class="end food" x="1196" y="1016">McDonald's</text>
          <text class="end food" x="1196" y="1036">Kingsmeadow Services</text>
          <text class="food" x="1510" y="0">Little Chef</text>
          <text class="park" x="388" y="504">Home Park</text>
          <text class="lake" transform="translate(382 599) rotate(14)">The Lake</text>
          <text class="water" transform="translate(1087 656) rotate(43)">River Churn</text>
          <text class="water" transform="translate(1177 748) rotate(73)">River Churn</text>
        </g>
        <g class="town"><text x="726" y="375">Cirencester</text><text x="1737" y="1151">Preston</text></g>
        <g class="estate"><text x="1026" y="1220">LOVE LANE</text><text x="1026" y="1241">INDUSTRIAL</text><text x="1026" y="1262">ESTATE</text></g>
      </g>

      <g fill="#fff"><circle cx="120" cy="719" r="10"/><circle cx="608" cy="659" r="10"/><circle cx="586" cy="769" r="10"/><circle cx="1210" cy="1025" r="10"/><circle cx="1552" cy="775" r="10"/><circle cx="1305" cy="1105" r="10"/><circle cx="1573" cy="466" r="10"/><circle cx="1458" cy="0" r="10"/></g>
      <g fill="#8b6a63"><path d="M113 718L120 715L127 718L120 721ZM116 721L120 723L124 721V725H116ZM1566 465L1573 462L1580 465L1573 468ZM1569 468L1573 470L1577 468V472H1569ZM581 763H583V765H585V763H587V765H589V763H591V767L589 768V773H591V776H581V773H583V768L581 767ZM1545 773Q1552 778 1559 770V779Q1552 782 1545 779Z"/></g>
      <g fill="#6a74c8"><path d="M602 654H605L606 656H614L613 662H606L605 663H613V664H604V655H602ZM1299 1100H1302L1303 1102H1311L1310 1108H1303L1302 1109H1310V1110H1301V1101H1299Z"/><circle cx="606" cy="666" r="1"/><circle cx="612" cy="666" r="1"/><circle cx="1303" cy="1112" r="1"/><circle cx="1309" cy="1112" r="1"/></g>
      <path d="M1205 1020V1024Q1207 1026 1207 1031M1209 1020V1024L1207 1026M1213 1020V1031M1215 1020V1025H1213M1455 0V6M1460 0V6" fill="none" stroke="#f08a24" stroke-width="2"/>

      <circle cx="906" cy="711" r="211" fill="#007aff" fill-opacity=".16"/>
      <path d="M906 711L842 510A211 211 0 0 1 975 511Z" fill="url(#beam)"/>
      <circle cx="906" cy="722" r="92" fill="url(#shade)" opacity=".6"/>
      <circle cx="906" cy="710" r="51" fill="#fff"/>
      <circle cx="906" cy="710" r="36" fill="#007aff"/>

      <g transform="translate(1671 141)">
        <circle r="81" fill="#000" fill-opacity=".9"/>
        <g stroke="#bfbfbf" stroke-width="3">
          <path d="M0-73V-56M0 56V73M-28-66L-21-52M28-66L21-52M-52-50L-41-39M52-50L41-39M-67-27L-52-21M67-27L52-21M-67 27L-52 21M67 27L52 21M-52 50L-41 39M52 50L41 39M-28 66L-21 52M28 66L21 52"/>
          <path d="M-74 0H-58M58 0H74" stroke="#444" stroke-width="1"/>
        </g>
        <path d="M0-43L19-9H-19Z" fill="#ff3b30"/>
        <text class="north" y="33" text-anchor="middle">N</text>
      </g>
    </svg>

    <h2 class="question">WHERE WOULD YOU LIKE&nbsp;<br>TO TRAVEL TODAY?</h2>

    <ul class="choices">
      <li><a href="#saved"><span>YOUR SAVED LOCATIONS</span><svg viewBox="0 0 44 64" aria-hidden="true"><path d="M5 4L36 32L5 60"/></svg></a></li>
      <li><a href="#modpod-map"><span>USE THE MODPOD MAP</span><svg viewBox="0 0 44 64" aria-hidden="true"><path d="M5 4L36 32L5 60"/></svg></a></li>
      <li><a href="#search"><span>SEARCH FOR YOUR DESTINATION</span><svg viewBox="0 0 44 64" aria-hidden="true"><path d="M5 4L36 32L5 60"/></svg></a></li>
    </ul>
  </main>

  <nav class="tabs" aria-label="Main">
    <a href="#for-you">
      <svg viewBox="0 0 154 154" aria-hidden="true">
        <rect x="6" y="6" width="142" height="142" fill="none" stroke="#929292" stroke-width="6"/>
        <path d="M47 68C31 55 25 47 25 40C25 27 40 23 47 34C54 23 69 27 69 40C69 47 63 55 47 68Z" fill="#929292"/>
        <path d="M83 31H132M83 49H132M83 68H132M83 86H132M83 105H132M83 123H132M22 86H71M22 105H71M22 123H71" stroke="#929292" stroke-width="6"/>
      </svg>
      <span>For You</span>
    </a>
    <a href="#media">
      <svg viewBox="0 0 154 154" aria-hidden="true" fill="none" stroke="#929292">
        <rect x="4" y="4" width="146" height="146" rx="32" stroke-width="6"/>
        <path d="M61 87H38V44H116V87H93" stroke-width="5"/>
        <path d="M77 77L104 107Q106 111 104 111H50Q48 111 50 107Z" fill="#929292" stroke="none"/>
      </svg>
      <span>Media</span>
    </a>
    <a href="#explore" class="active" aria-current="page">
      <svg viewBox="0 0 154 154" aria-hidden="true">
        <circle cx="77" cy="77" r="77" fill="#007aff"/>
        <path d="M124 29L89 81L30 123L67 68Z" fill="#f7f7f7"/>
        <path d="M72 72L82 81L43 111Z" fill="#007aff"/>
      </svg>
      <span>Explore</span>
    </a>
    <a href="#map" class="short">
      <svg viewBox="0 0 154 154" aria-hidden="true">
        <path d="M31 143V18Q31 6 43 6H101Q113 6 113 18V143L72 107Z" fill="none" stroke="#929292" stroke-width="6"/>
      </svg>
      <span>Map</span>
    </a>
    <a href="#settings" class="short">
      <svg viewBox="0 0 154 154" aria-hidden="true" fill="none" stroke="#929292">
        <circle cx="77" cy="77" r="55" stroke-width="11"/>
        <g fill="#929292" stroke="none">
          <g id="teeth"><path id="tooth" d="M137 70L153 72V82L137 84Z"/><use href="#tooth" transform="rotate(20 77 77)"/><use href="#tooth" transform="rotate(40 77 77)"/></g>
          <use href="#teeth" transform="rotate(60 77 77)"/><use href="#teeth" transform="rotate(120 77 77)"/><use href="#teeth" transform="rotate(180 77 77)"/><use href="#teeth" transform="rotate(240 77 77)"/><use href="#teeth" transform="rotate(300 77 77)"/>
        </g>
        <path d="M77 77H128M77 77L51 33M77 77L51 121" stroke-width="7"/>
      </svg>
      <span>Settings</span>
    </a>
  </nav>
</div>
</body>
</html>
```
FILE: styles.css
```css
* { box-sizing: border-box; }

body {
  margin: 0;
  background: #fefefe;
  color: #707070;
  font-family: Lato, "Open Sans", sans-serif;
}

a { color: inherit; text-decoration: none; }
svg { display: block; flex: none; }

.app {
  display: flex;
  flex-direction: column;
  min-height: 100vh;
}

/* Status bar */
.status {
  display: grid;
  grid-template-columns: 1fr auto 1fr;
  align-items: center;
  height: 126px;
  padding: 0 33px 0 39px;
  color: #000;
  font: 67px/1 "Liberation Sans", Arial, sans-serif;
}
.status-left, .status-right { display: flex; align-items: center; }
.status-right { justify-content: flex-end; gap: 22px; }
.signal { display: flex; gap: 9px; }
.signal i { width: 34px; height: 34px; border-radius: 50%; background: #000; }
.signal .off { background: none; border: 2px solid #000; }
.carrier { margin-left: 26px; font-size: 73px; }
.clock { padding-right: 14px; }
.wifi { width: 78px; margin-left: 50px; }
.battery { width: 152px; }

/* Support links */
.tools {
  display: flex;
  justify-content: center;
  gap: 366px;
  margin-top: 66px;
  padding-left: 8px;
  color: #999;
  font-size: 55px;
  line-height: 76px;
}
.tools a { display: flex; align-items: center; gap: 26px; }
.tools a + a { gap: 34px; }
.tools svg { width: 66px; }

/* Headings */
h1, h2 { margin: 0; font-weight: 400; text-align: center; }
.welcome { margin-top: 126px; font-size: 58px; line-height: 74px; letter-spacing: 16px; }
.question { margin-top: 170px; font-size: 62px; line-height: 77px; letter-spacing: 16px; }

/* Logo */
.logo { width: 64%; margin: 134px auto 0; overflow: visible; }
.mark { font-size: 438px; stroke-width: 4px; }
.cap { font-family: "DejaVu Sans", sans-serif; }
.low { font-size: 420px; }
.navy { fill: #222b66; stroke: #222b66; }
.pale { fill: #ddd; stroke: #ddd; }
.tagline { fill: #222b66; font-size: 70px; font-weight: 500; }

/* Map */
.map { width: 78.5%; margin: 140px auto 0; }
.map use, .map g { stroke-linejoin: round; }
.minor-edge, .minor-fill, .major-edge, .major-fill, .broad-edge, .broad-fill,
.yellow-edge, .yellow-fill, .ramp-edge, .ramp-fill, .stream, .river, .path { fill: none; stroke-linecap: round; }
.minor-edge { stroke: #dad4ca; stroke-width: 19px; }
.minor-fill { stroke: #f9f7f3; stroke-width: 13px; }
.major-edge { stroke: #d8d3c9; stroke-width: 10px; }
.major-fill { stroke: #fff; stroke-width: 8px; }
.broad-edge { --wide: 19px; stroke: #d8d3c9; stroke-width: 13px; }
.broad-fill { --wide: 17px; stroke: #fff; stroke-width: 11px; }
.yellow-edge { --wide: 16px; stroke: #e3bb50; stroke-width: 11px; }
.yellow-fill { --wide: 12px; stroke: #ffe168; stroke-width: 8px; }
.ramp-edge { stroke: #d8d3c9; stroke-width: 7px; }
.ramp-fill { stroke: #ffdf9a; stroke-width: 5px; }
.wide { stroke-width: var(--wide); }
.path { stroke: #d0cbbd; stroke-width: 3px; }
.stream { stroke: #a6cbff; stroke-width: 5px; }
.river { stroke: #8abaff; stroke-width: 10px; }

.label {
  fill: #5b5346;
  stroke: #f4f1ea;
  stroke-width: 3px;
  paint-order: stroke;
  font-family: Roboto, sans-serif;
  text-anchor: middle;
  dominant-baseline: central;
}
.s { font-size: 15px; fill: #463f36; }
.m { font-size: 18px; }
.p { font-size: 17px; fill: #443f3a; }
.brown { fill: #7a430c; stroke: #ffe58a; }
.end { text-anchor: end; }
.navy-text { fill: #363c72; }
.food { fill: #84403b; }
.park { fill: #357035; stroke: #dcebc4; font-style: italic; }
.lake { fill: #4c6c99; stroke: #b5d6ff; font-size: 20px; font-style: italic; }
.water { fill: #5077ad; stroke: none; }
.town { fill: #897c5d; font-size: 22px; letter-spacing: 6px; }
.estate { fill: #b1a577; font-size: 17px; font-style: italic; letter-spacing: 2px; }
.north { fill: #bfbfbf; font-family: "Liberation Sans", Arial, sans-serif; font-size: 46px; }

/* Destination list */
.choices {
  margin: 151px 0 0;
  padding: 0;
  list-style: none;
  border-top: 4px solid #c8c7cc;
  font-size: 47px;
  letter-spacing: 13px;
}
.choices a {
  display: flex;
  justify-content: space-between;
  align-items: center;
  height: 203px;
  padding: 0 130px 0 530px;
}
.choices span { padding-bottom: 6px; }
.choices li { border-bottom: 4px solid #c8c7cc; }
.choices li:nth-child(1) { margin-left: 68px; }
.choices li:nth-child(2) { margin-left: 98px; }
.choices li:nth-child(3) { margin-left: 6px; }
.choices li:nth-child(1) a { padding-left: 462px; }
.choices li:nth-child(2) a { padding-left: 432px; }
.choices li:nth-child(3) a { padding-left: 524px; }
.choices svg { width: 44px; fill: none; stroke: #c7c7cc; stroke-width: 8px; }

/* Tab bar */
.tabs {
  display: grid;
  grid-template-columns: 474fr 410fr 552fr 338fr 518fr 11fr;
  margin-top: auto;
  height: 306px;
  padding-top: 39px;
  border-top: 4px solid #b1b1b1;
  background: #f7f7f7;
  color: #929292;
  font-family: "Noto Sans", "Open Sans", sans-serif;
  font-size: 55px;
}
.tabs a { display: flex; flex-direction: column; align-items: center; }
.tabs svg { width: 154px; }
.tabs span { margin-top: 26px; line-height: 78px; }
.tabs .short span { margin-top: 23px; }
.tabs .active { color: #007aff; }
```
